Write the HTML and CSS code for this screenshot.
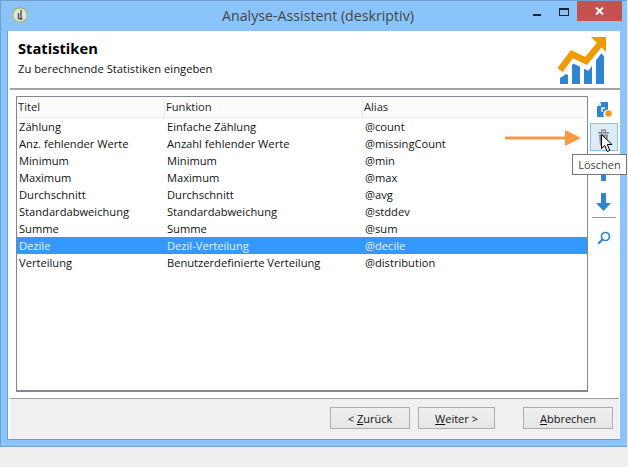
FILE: index.html
```html
<!DOCTYPE html>
<html lang="de">
<head>
<meta charset="utf-8">
<title>Analyse-Assistent (deskriptiv)</title>
<link rel="stylesheet" href="styles.css">
</head>
<body>
<div class="window">
  <div class="titlebar">
    <svg class="app-icon" width="16" height="16" viewBox="0 0 16 16"><circle cx="8" cy="8" r="7.2" fill="#e4e4df" stroke="#9cc05c" stroke-width="1.2"/><path d="M9 3v7.5M6.5 6v5.5h4" fill="none" stroke="#555" stroke-width="1.5"/><circle cx="9" cy="12.2" r="1" fill="#555"/></svg>
    <div class="title">Analyse-Assistent (deskriptiv)</div>
    <div class="win-controls">
      <span class="minimize"></span>
      <span class="maximize"></span>
      <span class="close"><svg width="9" height="8" viewBox="0 0 9 8"><path d="M1 .5l7 7M8 .5l-7 7" stroke="#fff" stroke-width="2"/></svg></span>
    </div>
  </div>
  <div class="client">
    <header class="head">
      <div class="head-text">
        <h1>Statistiken</h1>
        <p>Zu berechnende Statistiken eingeben</p>
      </div>
      <svg class="chart" width="50" height="50" viewBox="0 0 50 50">
        <path d="M2 47v-6l6-4 2 1v9zM14 47V25l3-1 5 3v20zM26 47V29l8-2v20zM38 47V20l4-5 4 4v28z" fill="#2e86d2"/>
        <path d="M2 36L14 21l15 7L43 9" fill="none" stroke="#fff" stroke-width="9"/>
        <path d="M2 33L14 17l14 7L42 7" fill="none" stroke="#f09a00" stroke-width="6.500"/>
        <path d="M33 0h15v15z" fill="#f09a00"/>
      </svg>
    </header>
    <div class="main">
      <div class="list">
        <div class="row list-head"><span>Titel</span><span>Funktion</span><span>Alias</span></div>
        <div class="row"><span>Zählung</span><span>Einfache Zählung</span><span>@count</span></div>
        <div class="row"><span>Anz. fehlender Werte</span><span>Anzahl fehlender Werte</span><span>@missingCount</span></div>
        <div class="row"><span>Minimum</span><span>Minimum</span><span>@min</span></div>
        <div class="row"><span>Maximum</span><span>Maximum</span><span>@max</span></div>
        <div class="row"><span>Durchschnitt</span><span>Durchschnitt</span><span>@avg</span></div>
        <div class="row"><span>Standardabweichung</span><span>Standardabweichung</span><span>@stddev</span></div>
        <div class="row"><span>Summe</span><span>Summe</span><span>@sum</span></div>
        <div class="row selected"><span>Dezile</span><span>Dezil-Verteilung</span><span>@decile</span></div>
        <div class="row"><span>Verteilung</span><span>Benutzerdefinierte Verteilung</span><span>@distribution</span></div>
      </div>
      <div class="tools">
        <div class="tool tool-add">
          <svg width="16" height="17" viewBox="0 0 16 17"><path d="M5 1h7v7.500a4.500 4.500 0 0 0-3.500 7.500H1V6z" fill="#2e86d2"/><path d="M5 2v3H2z" fill="#fff"/><path d="M6 11V7h3" fill="none" stroke="#fff" stroke-width="1.500"/><circle cx="12.500" cy="12.500" r="3.200" fill="#f39a1e"/></svg>
        </div>
        <div class="tool hover">
          <svg width="13" height="17" viewBox="0 0 13 17"><path d="M1 3h11v1.500H1zM4 3V.5h5V3zM5 2h3v1H5z" fill="#82888e" fill-rule="evenodd"/><path d="M2 5.500h9L10 16.500H3z" fill="#82888e"/><path d="M4.700 7v8M8.300 7v8" stroke="#c0c6cc" stroke-width="1"/></svg>
        </div>
        <div class="tool tool-up">
          <svg width="15" height="18" viewBox="0 0 15 18"><path d="M7.500 0L15 8H10v10H5V8H0z" fill="#2e86d2"/></svg>
        </div>
        <div class="tool tool-down">
          <svg width="15" height="18" viewBox="0 0 15 18"><path d="M5 0h5v10h5l-7.500 8L0 10h5z" fill="#2e86d2"/></svg>
        </div>
        <div class="tool-sep"></div>
        <div class="tool">
          <svg width="14" height="14" viewBox="0 0 14 14"><circle cx="8.500" cy="5.500" r="4" fill="none" stroke="#2e86d2" stroke-width="1.700"/><path d="M5.500 8.500L1.200 12.800" stroke="#2e86d2" stroke-width="2.200"/></svg>
        </div>
      </div>
    </div>
    <footer class="foot">
      <button class="btn btn-back">&lt; <u>Z</u>urück</button>
      <button class="btn btn-next"><u>W</u>eiter &gt;</button>
      <button class="btn btn-cancel"><u>A</u>bbrechen</button>
    </footer>
  </div>
</div>
<svg class="callout" width="76" height="16" viewBox="0 0 76 16"><path d="M0 6.500h60v-6.500l16 8-16 8v-6.500H0z" fill="#f79a45"/></svg>
<div class="tooltip">Löschen</div>
<svg class="cursor" width="12" height="18" viewBox="0 0 12 18"><path d="M.5.500v14l3.300-3 2.500 6 2.500-1-2.500-6h4.800z" fill="#fff" stroke="#000" stroke-width="1"/></svg>
</body>
</html>
```

FILE: styles.css
```css
* { box-sizing: border-box; }
html, body { margin: 0; padding: 0; }
body {
  position: relative;
  width: 628px;
  height: 467px;
  overflow: hidden;
  background: #efefef;
  font-family: "Open Sans", "Noto Sans", sans-serif;
  font-size: 11px;
  color: #111;
}
.window {
  width: 627px;
  height: 447px;
  display: flex;
  flex-direction: column;
  background: #8ac4fa;
  border: 1px solid #6f9fcf;
  border-right: none;
  padding: 0 7px 6px 6px;
}
.titlebar {
  height: 30px;
  flex: none;
  display: flex;
  align-items: flex-start;
  position: relative;
}
.app-icon { margin: 6px 0 0 5px; flex: none; }
.title {
  position: absolute;
  left: 215px;
  top: 5px;
  width: 192px;
  text-align: center;
  font-size: 14.2px;
  line-height: 20px;
  white-space: nowrap;
  color: #444;
}
.win-controls {
  margin-left: auto;
  margin-right: -2px;
  display: flex;
  align-items: flex-start;
}
.minimize {
  width: 8px;
  height: 2px;
  margin-top: 13px;
  background: #222;
}
.maximize {
  width: 10px;
  height: 8px;
  margin: 7px 8px 0 18px;
  border: 1px solid #222;
  border-top-width: 2px;
}
.close {
  width: 45px;
  height: 20px;
  background: #c75050;
  display: flex;
  align-items: center;
  justify-content: center;
}
.client {
  flex: 1;
  min-height: 0;
  display: flex;
  flex-direction: column;
  background: #fff;
  border: 1px solid #6f9fcf;
  border-width: 0 0 1px 1px;
}
.head {
  height: 59px;
  flex: none;
  margin-left: 2px;
  display: flex;
  justify-content: space-between;
  border-bottom: 2px solid #a3a3a3;
  background: #fff;
  padding: 8px 12px 0 8px;
}
.head h1 {
  margin: 0;
  font-size: 14.7px;
  line-height: 18px;
  font-weight: 700;
  color: #000;
}
.head p {
  margin: 4px 0 0;
  font-size: 11.23px;
  line-height: 15px;
}
.chart { margin-top: -2px; flex: none; }
.main {
  flex: 1;
  min-height: 0;
  display: flex;
  padding: 6px 0 6px 8px;
}
.list {
  width: 572px;
  border: 2px solid #828790;
  border-width: 1px 1px 2px 1px;
  font-size: 11.15px;
}
.row {
  display: grid;
  grid-template-columns: 148px 198px 1fr;
  height: 17px;
  line-height: 17px;
  padding-left: 2px;
  white-space: nowrap;
}
.list-head {
  height: 21px;
  line-height: 20px;
  padding-left: 1px;
  background: #fbfbfb;
  border-bottom: 1px solid #e6eef6;
  color: #222;
}
.list-head span + span {
  border-left: 1px solid #e4ecf5;
  padding-left: 1px;
  margin-left: -2px;
}
.selected { background: #3399ff; color: #e6f2ff; }
.tools {
  width: 31px;
  flex: none;
  display: flex;
  flex-direction: column;
  align-items: center;
}
.tool {
  width: 28px;
  height: 28px;
  flex: none;
  display: flex;
  align-items: center;
  justify-content: center;
}
.tool-add { height: 27px; }
.hover {
  background: #dcecfb;
  border: 1px solid #8cbcec;
  justify-content: flex-start;
  padding-left: 6px;
}
.tool-up { height: 42px; }
.tool-down { height: 18px; }
.tool-sep {
  width: 24px;
  height: 1px;
  flex: none;
  background: #9a9a9a;
  margin: 6px 0 6px;
}
.foot {
  height: 41px;
  flex: none;
  margin-left: 2px;
  margin-right: 1px;
  background: #f0f0f0;
  border-top: 1px solid #a0a0a0;
  display: flex;
  align-items: flex-start;
  padding-top: 8px;
  padding-left: 320px;
}
.btn {
  height: 22px;
  padding: 0;
  border: 1px solid #acacac;
  background: linear-gradient(#f0f0f0, #e5e5e5);
  font: inherit;
  color: #111;
  line-height: 19px;
}
.btn-back { width: 80px; margin-right: 8px; }
.btn-next { width: 77px; margin-right: 28px; }
.btn-cancel { width: 90px; }
.callout { position: absolute; left: 505px; top: 130px; }
.tooltip {
  position: absolute;
  left: 572px;
  top: 154px;
  width: 55px;
  height: 21px;
  background: #fff;
  border: 1px solid #767676;
  text-align: center;
  line-height: 19px;
  font-size: 11px;
  color: #444;
}
.cursor { position: absolute; left: 601px; top: 134px; }
```
